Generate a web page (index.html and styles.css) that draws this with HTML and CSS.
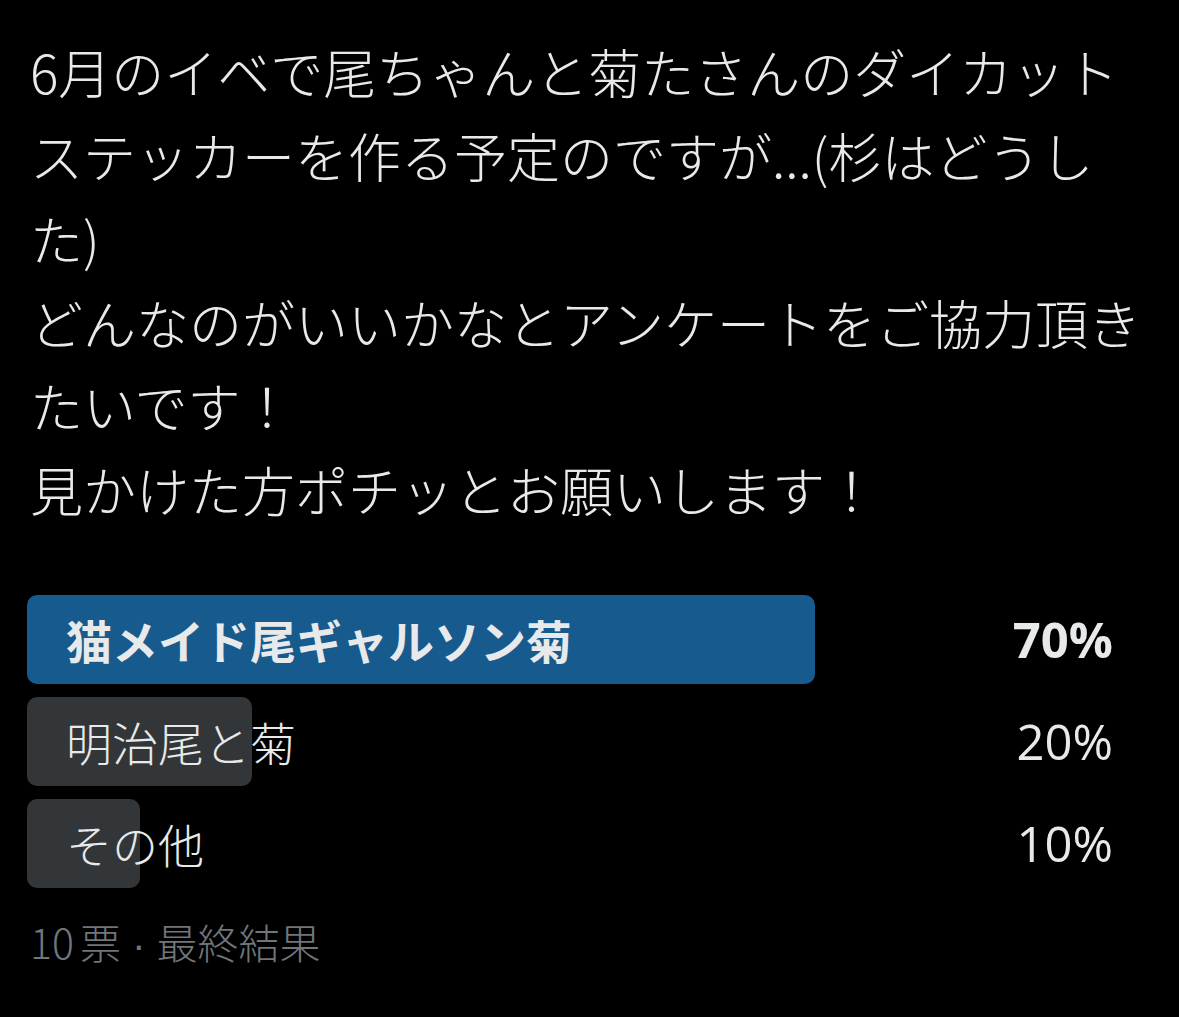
FILE: index.html
```html
<!DOCTYPE html>
<html lang="ja">
<head>
    <meta charset="UTF-8">
    <meta name="viewport" content="width=device-width, initial-scale=1.0">
    <title>アンケート</title>
    <link rel="stylesheet" href="styles.css">
</head>
<body>
    <div class="tweet">
        <!-- Tweet text -->
        <p class="tweet-text">
            6月のイベで尾ちゃんと菊たさんのダイカット<br>
            ステッカーを作る予定のですが...(杉はどうし<br>
            た)<br>
            どんなのがいいかなとアンケートをご協力頂き<br>
            たいです！<br>
            見かけた方ポチッとお願いします！
        </p>

        <!-- Poll -->
        <div class="poll">
            <div class="poll-option winner">
                <div class="poll-fill" style="width: 70%;"></div>
                <span class="poll-label">猫メイド尾ギャルソン菊</span>
                <span class="poll-percent">70%</span>
            </div>
            <div class="poll-option">
                <div class="poll-fill" style="width: 20%;"></div>
                <span class="poll-label">明治尾と菊</span>
                <span class="poll-percent">20%</span>
            </div>
            <div class="poll-option">
                <div class="poll-fill" style="width: 10%;"></div>
                <span class="poll-label">その他</span>
                <span class="poll-percent">10%</span>
            </div>
        </div>

        <div class="poll-meta">10<span class="gap"></span>票<span class="dot">·</span>最終結果</div>
    </div>
</body>
</html>
```

FILE: styles.css
```css
/* General Styles */
body {
    margin: 0;
    background: #000;
    color: #e7e9ea;
    font-family: "Noto Sans CJK JP", "Noto Sans", sans-serif;
    font-weight: 300;
}

.tweet {
    padding: 30px 27px 0 30px;
}

/* Tweet text */
.tweet-text {
    margin: 0;
    font-size: 53px;
    line-height: 83.6px;
    white-space: nowrap;
}

/* Poll */
.poll {
    margin: 63px 0 0 -3px;
    display: flex;
    flex-direction: column;
    gap: 13px;
}

.poll-option {
    position: relative;
    display: flex;
    align-items: center;
    justify-content: space-between;
    height: 89px;
    padding: 0 39px;
}

.poll-fill {
    position: absolute;
    top: 0;
    left: 0;
    bottom: 0;
    background: #333639;
    border-radius: 10px;
}

.poll-option.winner .poll-fill {
    background: #175a8d;
}

.poll-label {
    position: relative;
    font-size: 46px;
    line-height: 1;
}

.poll-percent {
    position: relative;
    font-family: "Open Sans", "Noto Sans", sans-serif;
    font-weight: 400;
    font-size: 49px;
    line-height: 1;
}

.poll-option.winner .poll-label,
.poll-option.winner .poll-percent {
    font-weight: bold;
}

.poll-meta {
    margin-top: 23px;
    font-size: 41px;
    line-height: 60px;
    color: #71767b;
}

.poll-meta .gap {
    display: inline-block;
    width: 6px;
}

.poll-meta .dot {
    font-family: "Liberation Sans", sans-serif;
    margin: 0 11px;
}
```
